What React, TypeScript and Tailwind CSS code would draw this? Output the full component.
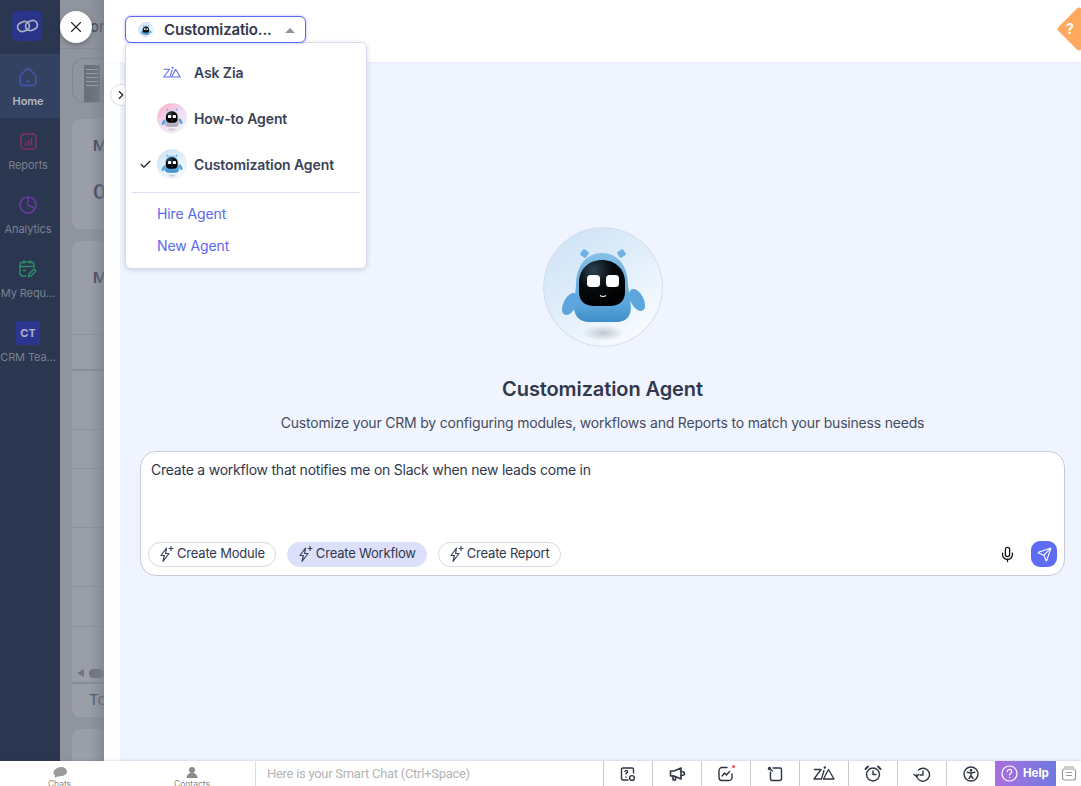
import React from "react";
import { X, ChevronRight, Check, Mic, Send } from "lucide-react";

const font = { fontFamily: "Inter, 'Liberation Sans', sans-serif" };

function Robot({ size, pink = false, id }: { size: number; pink?: boolean; id: string }) {
  const dark = pink ? "#a9a3bb" : "#3f8dc8";
  const light = pink ? "#d8d4e4" : "#86c0e8";
  return (
    <svg width={size} height={size} viewBox="0 0 120 120" className="shrink-0">
      <defs>
        <linearGradient id={id + "bg"} x1="0.15" y1="0.05" x2="0.8" y2="0.95">
          {pink ? (
            <>
              <stop offset="0" stopColor="#ffb0d0" />
              <stop offset="0.45" stopColor="#f0d8ec" />
              <stop offset="1" stopColor="#f3f2fa" />
            </>
          ) : (
            <>
              <stop offset="0" stopColor="#cfe3f6" />
              <stop offset="0.55" stopColor="#e4f0fb" />
              <stop offset="1" stopColor="#f9fcff" />
            </>
          )}
        </linearGradient>
        <linearGradient id={id + "body"} x1="0" y1="0" x2="0" y2="1">
          <stop offset="0" stopColor={light} />
          <stop offset="0.75" stopColor={pink ? "#bdb8cb" : "#5aa5dc"} />
          <stop offset="1" stopColor={dark} />
        </linearGradient>
        <radialGradient id={id + "face"} cx="0.32" cy="0.22" r="0.8">
          <stop offset="0" stopColor="#2c4250" />
          <stop offset="0.5" stopColor="#070b0f" />
          <stop offset="1" stopColor="#000" />
        </radialGradient>
        <radialGradient id={id + "shadow"}>
          <stop offset="0" stopColor="#b4b8c2" stopOpacity="0.75" />
          <stop offset="1" stopColor="#b4b8c2" stopOpacity="0" />
        </radialGradient>
      </defs>
      <circle cx="60" cy="60" r="59.5" fill={`url(#${id}bg)`} stroke="#d6dcee" />
      <ellipse cx="60" cy="106" rx="21" ry="8" fill={`url(#${id}shadow)`} />
      <rect x="38" y="23" width="7" height="7" rx="1.5" transform="rotate(35 41.5 26.5)" fill="#6db2e2" />
      <rect x="75" y="23" width="7" height="7" rx="1.5" transform="rotate(-35 78.5 26.500)" fill="#6db2e2" />
      <ellipse cx="27" cy="77" rx="6.500" ry="12" transform="rotate(28 27 77)" fill="#5ca6dd" />
      <ellipse cx="94" cy="73" rx="6.500" ry="12" transform="rotate(-28 94 73)" fill="#5ca6dd" />
      <path d="M33 58 C33 38 44 26 59 26 C74 26 85 38 85 58 L88 80 C88 90 82 95 74 95 L46 95 C38 95 31 90 31 80 Z" fill={`url(#${id}body)`} />
      <path d="M36 55 C36 42 46 33 59 33 C72 33 82 42 82 55 L82 65 C82 74 76 79 67 79 L51 79 C42 79 36 74 36 65 Z" fill={`url(#${id}face)`} />
      <rect x="44" y="48" width="13" height="12" rx="3.500" fill="#fff" />
      <rect x="63" y="48" width="13" height="12" rx="3.500" fill="#fff" />
      <path d="M57 68.500 Q60 70.500 63 68.500" stroke="#fff" strokeWidth="1.2" fill="none" />
    </svg>
  );
}

function ZiaLogo({ w = 18, h = 13, color = "#5a68ee", sw = 1.3 }: { w?: number; h?: number; color?: string; sw?: number }) {
  return (
    <svg width={w} height={h} viewBox="0 0 22 15" fill="none" stroke={color} strokeWidth={sw} strokeLinejoin="round" strokeLinecap="round">
      <path d="M1.500 3.500H8L1 13H8" />
      <path d="M11 4.500L8.500 13" />
      <circle cx="11.800" cy="1.600" r="0.600" fill={color} />
      <path d="M15.500 3.500L21 13H10.500Z" />
    </svg>
  );
}

function Spark() {
  return (
    <svg width="17" height="18" viewBox="0 0 17 18" fill="none" stroke="#3d4660" strokeWidth="1.2" strokeLinejoin="round" strokeLinecap="round">
      <path d="M8.500 3L3 10.500H6.400L5 16.500L11 8.500H7.600L8.500 3Z" />
      <path d="M13 1.500V5.500M11 3.500H15" />
    </svg>
  );
}

function Chip({ label, active = false }: { label: string; active?: boolean }) {
  return (
    <div className={`flex items-center gap-[2px] h-[25px] pl-[9px] pr-[10px] rounded-full text-[13px] tracking-[-0.2px] text-[#30384e] border ${active ? "bg-[#dde0fa] border-[#dde0fa]" : "bg-white border-[#d8dae8]"}`}>
      <Spark />
      <span>{label}</span>
    </div>
  );
}

function NavItem({ icon, label, active = false }: { icon: React.ReactNode; label: string; active?: boolean }) {
  return (
    <div className={`h-[64px] shrink-0 flex flex-col items-center justify-start pt-[12px] pr-[4px] ${active ? "bg-[#344262]" : ""}`}>
      <div className="h-[22px] flex items-center">{icon}</div>
      <div className={`mt-[6px] text-[11px] tracking-[-0.1px] leading-[14px] whitespace-nowrap ${active ? "text-[#b4b8c2] font-semibold" : "text-[#7b8190]"}`}>{label}</div>
    </div>
  );
}

function Row({ h, thick = false }: { h: number; thick?: boolean }) {
  return <div style={{ height: h }} className={`shrink-0 ${thick ? "border-b-[2px] border-[#868b99]" : "border-b border-[#8c919e]"}`} />;
}

function BarIcon({ children }: { children: React.ReactNode }) {
  return <div className="w-[49px] h-full flex items-center justify-center border-l border-[#c6c8d2]">{children}</div>;
}

const stroke = { fill: "none", stroke: "#2f3542", strokeWidth: 1.4, strokeLinecap: "round", strokeLinejoin: "round" } as const;

export default function App() {
  return (
    <div style={font} className="relative w-[1081px] h-[786px] overflow-hidden flex flex-col bg-white">
      <div className="flex h-[761px] shrink-0 min-h-0">
        {/* nav */}
        <div className="w-[60px] shrink-0 bg-[#2b3650] flex flex-col">
          <div className="h-[54px] shrink-0 pt-[11px] pl-[12px]">
            <div className="w-[30px] h-[30px] rounded-[5px] bg-[#2a3488] flex items-center justify-center">
              <svg width="23" height="16" viewBox="0 0 23 16" fill="none" stroke="#aab0c4" strokeWidth="1.800">
                <rect x="1.500" y="4" width="12" height="9" rx="4.500" transform="rotate(-22 7.500 8.500)" />
                <rect x="9.500" y="3" width="12" height="9" rx="4.500" transform="rotate(-22 15.500 7.500)" />
              </svg>
            </div>
          </div>
          <NavItem
            active
            label="Home"
            icon={
              <svg width="18" height="20" viewBox="0 0 18 20" fill="none" stroke="#4358b0" strokeWidth="1.500" strokeLinecap="round" strokeLinejoin="round">
                <path d="M2 7.500L7.500 2.300a2.200 2.200 0 0 1 3 0L16 7.500a2 2 0 0 1 .7 1.500v6.500a3 3 0 0 1-3 3H4.300a3 3 0 0 1-3-3V9A2 2 0 0 1 2 7.500Z" />
                <path d="M7.500 14.500h3" />
              </svg>
            }
          />
          <NavItem
            label="Reports"
            icon={
              <svg width="17" height="17" viewBox="0 0 17 17" fill="none" stroke="#8a2f5e" strokeWidth="1.500" strokeLinecap="round">
                <rect x="1" y="1" width="15" height="15" rx="3.500" />
                <path d="M5.500 12V10M8.500 12V8M11.500 12V5.500" />
              </svg>
            }
          />
          <NavItem
            label="Analytics"
            icon={
              <svg width="18" height="18" viewBox="0 0 18 18" fill="none" stroke="#6b3aa5" strokeWidth="1.500" strokeLinejoin="round">
                <circle cx="9" cy="9" r="8" />
                <path d="M9 1V9L16 12.500" />
              </svg>
            }
          />
          <NavItem
            label="My Requ..."
            icon={
              <svg width="18" height="18" viewBox="0 0 18 18" fill="none" stroke="#2f8a68" strokeWidth="1.500" strokeLinecap="round" strokeLinejoin="round">
                <path d="M7 16H4a3 3 0 0 1-3-3V5a3 3 0 0 1 3-3h8a3 3 0 0 1 3 3v2" />
                <path d="M1 6.500h14M5 .800v2.500M11 .800v2.500M4.500 10.500h2" />
                <path d="M9.500 16.500l.5-2.500 5-5 2 2-5 5Z" />
              </svg>
            }
          />
          <NavItem
            label="CRM Tea..."
            icon={
              <div className="w-[24px] h-[24px] rounded-[3px] bg-[#2c3590] flex items-center justify-center text-[11px] font-bold text-[#aab4c8]">CT</div>
            }
          />
        </div>

        {/* dimmed page */}
        <div className="w-[44px] shrink-0 bg-[#90949f] overflow-hidden flex flex-col relative text-[#3c4250]">
          <div className="h-[49px] shrink-0 border-b border-[#868b97] pl-[30px] pt-[18px] text-[15px] leading-[18px] whitespace-nowrap font-medium">on</div>
          <div className="ml-[12px] mt-[9px] w-[60px] h-[45px] shrink-0 rounded-l-[12px] border border-[#81858f] flex items-end gap-[1px] pl-[11px]">
            <div className="w-[16px] h-[37px] bg-[#6c7079] flex flex-col gap-[3px] pt-[4px] px-[2px]">
              <div className="h-[1px] bg-[#9a9ea8]" />
              <div className="h-[1px] bg-[#9a9ea8]" />
              <div className="h-[1px] bg-[#9a9ea8]" />
              <div className="h-[1px] bg-[#9a9ea8]" />
              <div className="h-[1px] bg-[#9a9ea8]" />
            </div>
            <div className="w-[6px] h-[24px] bg-[#7f838d]" />
          </div>
          <div className="ml-[12px] mt-[16px] h-[110px] shrink-0 rounded-l-[8px] bg-[#9a9ea8] pl-[21px] pt-[18px] text-[15px] leading-[18px] font-semibold">
            <div>M</div>
            <div className="mt-[25px] text-[20px] leading-[24px]">0</div>
          </div>
          <div className="ml-[12px] mt-[12px] h-[476px] shrink-0 rounded-l-[8px] bg-[#9a9ea8] flex flex-col">
            <div className="shrink-0 pl-[21px] pt-[28px] text-[15px] leading-[18px] font-semibold h-[94px] border-b border-[#8c919e]">M</div>
            <Row h={36} thick />
            <Row h={59} />
            <Row h={39} />
            <Row h={59} />
            <Row h={59} />
            <Row h={40} />
            <div className="h-[57px] shrink-0 border-b-[2px] border-[#868b99] flex items-end pb-[4px] pl-[5px] gap-[5px]">
              <div className="w-0 h-0 border-y-[4px] border-y-transparent border-r-[7px] border-r-[#70747f] mb-[1px]" />
              <div className="w-[20px] h-[9px] rounded-full bg-[#70747f]" />
            </div>
            <div className="pl-[17px] pt-[7px] text-[15px] leading-[18px] text-[#50545e]">To</div>
          </div>
          <div className="ml-[12px] mt-[12px] h-[40px] shrink-0 rounded-l-[8px] bg-[#9a9ea8]" />
          <div className="absolute right-0 top-0 bottom-0 w-[14px] bg-gradient-to-r from-transparent to-[#7c808c]/70" />
        </div>

        {/* panel */}
        <div className="flex-1 min-w-0 flex flex-col bg-white">
          <div className="h-[62px] shrink-0 bg-white shadow-[0_1px_2px_rgba(60,70,120,0.05)] relative z-10" />
          <div className="flex-1 flex">
            <div className="w-[16px] bg-white shrink-0" />
            <div className="flex-1 bg-[#f0f4fe] flex flex-col items-center pt-[165px] pl-[20px] pr-[16px]">
              <Robot size={120} id="main" />
              <div className="mt-[29px] text-[20px] leading-[26px] font-semibold tracking-[-0.1px] text-[#30384e]">Customization Agent</div>
              <div className="mt-[11px] text-[14px] leading-[20px] tracking-[-0.2px] text-[#444c60]">
                Customize your CRM by configuring modules, workflows and Reports to match your business needs
              </div>
              <div className="mt-[18px] w-[925px] h-[125px] shrink-0 rounded-[16px] border border-[#c9cbd8] bg-white flex flex-col justify-between pl-[10px] pr-[7px] pt-[8px] pb-[8px]">
                <div className="text-[14px] leading-[20px] tracking-[-0.23px] text-[#30384e]">Create a workflow that notifies me on Slack when new leads come in</div>
                <div className="flex items-center justify-between">
                  <div className="flex items-center gap-[11px] -ml-[3px]">
                    <Chip label="Create Module" />
                    <Chip active label="Create Workflow" />
                    <Chip label="Create Report" />
                  </div>
                  <div className="flex items-center gap-[15px]">
                    <Mic size={17} strokeWidth={1.800} color="#111" />
                    <div className="w-[26px] h-[26px] rounded-[9px] bg-[#5d6cf2] flex items-center justify-center">
                      <Send size={15} strokeWidth={1.800} color="#fff" />
                    </div>
                  </div>
                </div>
              </div>
            </div>
          </div>
        </div>
      </div>

      {/* bottom bar */}
      <div className="h-[25px] shrink-0 bg-white flex items-stretch shadow-[0_-1px_2px_rgba(60,70,100,0.15)] relative z-10 overflow-hidden">
        <div className="w-[119px] flex flex-col items-center pt-[6px]">
          <svg width="14" height="11" viewBox="0 0 14 11" fill="#9a9a9a" className="shrink-0">
            <ellipse cx="8" cy="4.500" rx="6" ry="4.500" />
            <ellipse cx="5" cy="5.500" rx="4.500" ry="4" />
            <path d="M2 8L1.500 11L5 9Z" />
          </svg>
          <div className="mt-[1px] text-[8.500px] leading-[10px] text-[#8a8a8a]">Chats</div>
        </div>
        <div className="w-[136px] flex flex-col items-center pt-[6px] pl-[10px]">
          <svg width="14" height="11" viewBox="0 0 14 11" fill="#8a8a8a" className="shrink-0">
            <circle cx="7" cy="3" r="3" />
            <path d="M1.500 11C1.500 7.500 4 6 7 6C10 6 12.500 7.500 12.500 11Z" />
          </svg>
          <div className="mt-[1px] text-[8.500px] leading-[10px] text-[#8a8a8a]">Contacts</div>
        </div>
        <div className="w-[348px] border-l border-[#dcdcdc] pl-[11px] flex items-center font-['Roboto',sans-serif] text-[13px] tracking-[-0.28px] text-[#b4b4b4]">
          Here is your Smart Chat (Ctrl+Space)
        </div>
        <BarIcon>
          <svg width="16" height="16" viewBox="0 0 16 16" {...stroke}>
            <path d="M8 14H3a1.500 1.500 0 0 1-1.500-1.500v-9A1.500 1.500 0 0 1 3 2h9a1.500 1.500 0 0 1 1.500 1.500V7" />
            <path d="M5 5.500a1.300 1.300 0 1 1 1.600 1.400c-.4.2-.6.4-.6 1M6 11v.2" />
            <circle cx="12" cy="12" r="2.400" />
          </svg>
        </BarIcon>
        <BarIcon>
          <svg width="17" height="16" viewBox="0 0 17 16" {...stroke} strokeWidth={1.600}>
            <path d="M12 2L5 5H1.500v5H5l7 3Z" />
            <path d="M12 5.500c2 0 3.500 1 3.500 2s-1.500 2-3.500 2" />
            <path d="M4 10v4h2.500v-3" />
          </svg>
        </BarIcon>
        <BarIcon>
          <div className="relative">
            <svg width="16" height="16" viewBox="0 0 16 16" {...stroke}>
              <path d="M9 1.500H4a3 3 0 0 0-3 3v7a3 3 0 0 0 3 3h7a3 3 0 0 0 3-3V8" />
              <path d="M4 10l2.500-3 2 2 3-3.500" />
            </svg>
            <div className="absolute -top-[1px] -right-[1px] w-[3px] h-[3px] rounded-full bg-[#f0504a]" />
          </div>
        </BarIcon>
        <BarIcon>
          <svg width="16" height="16" viewBox="0 0 16 16" {...stroke}>
            <path d="M6 2h7a1.500 1.500 0 0 1 1.500 1.500v9A2 2 0 0 1 12.500 14.500H5A1.500 1.500 0 0 1 3.500 13V6" />
            <circle cx="2.500" cy="2.500" r="1" />
            <path d="M3 3l2.500 2" />
          </svg>
        </BarIcon>
        <BarIcon>
          <ZiaLogo w={22} h={15} color="#2f3542" sw={1.300} />
        </BarIcon>
        <BarIcon>
          <svg width="18" height="17" viewBox="0 0 18 17" {...stroke}>
            <circle cx="9" cy="9.500" r="6.500" />
            <path d="M9 6v3.500h3" />
            <path d="M1.500 4L4 1.500M16.500 4L14 1.500" strokeWidth={1.800} />
          </svg>
        </BarIcon>
        <BarIcon>
          <svg width="18" height="16" viewBox="0 0 18 16" {...stroke}>
            <path d="M3.500 9a6.500 6.500 0 1 0 2-5" />
            <path d="M1 8.500l2.500 2 2-2" />
            <path d="M10 5v4H7" />
          </svg>
        </BarIcon>
        <BarIcon>
          <svg width="16" height="16" viewBox="0 0 16 16" {...stroke}>
            <circle cx="8" cy="8" r="7" />
            <circle cx="8" cy="4.300" r="0.700" fill="#2f3542" />
            <path d="M4.200 6.300L8 7l3.800-.7M8 7v2.500M8 9.500L6 12.500M8 9.500l2 3" />
          </svg>
        </BarIcon>
        <div className="w-[61px] flex items-center gap-[5px] pl-[6px] bg-gradient-to-r from-[#a96fde] to-[#6d79e0] text-white">
          <svg width="17" height="17" viewBox="0 0 17 17" fill="none" stroke="#fff" strokeWidth="1.200" strokeLinecap="round">
            <circle cx="8.500" cy="8.500" r="7.500" />
            <path d="M6.300 6.500a2.200 2.200 0 1 1 3.300 2c-.7.400-1.100.8-1.100 1.500M8.500 12.300v.1" />
          </svg>
          <span className="text-[11.500px] font-bold">Help</span>
        </div>
        <div className="flex-1 flex items-center justify-center">
          <svg width="16" height="15" viewBox="0 0 16 15" fill="none" stroke="#9a9a9a" strokeWidth="1.200" strokeLinejoin="round">
            <rect x="1.500" y="3" width="13" height="11" rx="2" />
            <path d="M3 1h10M5 6.500h6M5 9.500h6" />
          </svg>
        </div>
      </div>

      {/* close */}
      <div className="absolute left-[60px] top-[11px] w-[32px] h-[32px] rounded-full bg-white shadow-[0_2px_5px_rgba(0,0,0,0.25)] flex items-center justify-center z-20">
        <X size={18} strokeWidth={1.500} color="#222" />
      </div>

      {/* collapse chevron */}
      <div className="absolute left-[110px] top-[84px] w-[22px] h-[22px] rounded-full bg-white border border-[#dcdcea] flex items-center justify-center z-20">
        <ChevronRight size={14} strokeWidth={2} color="#222" />
      </div>

      {/* dropdown trigger */}
      <div className="absolute left-[125px] top-[16px] w-[181px] h-[27px] rounded-[6px] bg-white border border-[#5b6af5] shadow-[0_0_3px_rgba(91,106,245,0.5)] flex items-center pl-[12px] pt-[1px] z-30">
        <Robot size={16} id="trigger" />
        <span className="ml-[10px] text-[15px] font-semibold tracking-[-0.15px] text-[#30384e] whitespace-nowrap">Customizatio...</span>
        <div className="ml-[13px] w-0 h-0 border-x-[5px] border-x-transparent border-b-[5px] border-b-[#8f94a3]" />
      </div>

      {/* dropdown menu */}
      <div className="absolute left-[125px] top-[42px] w-[242px] h-[227px] rounded-[6px] bg-white border border-[#d8dbec] shadow-[0_1px_5px_rgba(60,70,120,0.2)] z-20 flex flex-col px-[6px]">
        <div className="h-[46px] mt-[6px] flex items-center pl-[31px] gap-[13px]">
          <ZiaLogo w={18} h={13} />
          <span className="text-[14px] font-semibold tracking-[-0.1px] text-[#3a4256]">Ask Zia</span>
        </div>
        <div className="h-[46px] flex items-center pl-[25px] gap-[7px]">
          <Robot size={30} pink id="howto" />
          <span className="text-[14px] font-semibold tracking-[-0.1px] text-[#3a4256]">How-to Agent</span>
        </div>
        <div className="h-[46px] flex items-center pl-[7px] gap-[5px]">
          <Check size={13} strokeWidth={2.200} color="#222" />
          <Robot size={30} id="cust" />
          <span className="ml-[2px] text-[14px] font-semibold tracking-[-0.1px] text-[#3a4256]">Customization Agent</span>
        </div>
        <div className="h-px bg-[#dcdcf0] mt-[5px]" />
        <div className="pl-[25px] mt-[4px] h-[32px] flex items-center text-[14px] tracking-[-0.1px] text-[#5a68ee]">Hire Agent</div>
        <div className="pl-[25px] h-[32px] flex items-center text-[14px] tracking-[-0.1px] text-[#5a68ee]">New Agent</div>
      </div>

      {/* help diamond */}
      <div className="absolute left-[1063px] top-[13px] w-[32px] h-[32px] rotate-45 rounded-[3px] bg-[#ffa95e] z-20" />
      <div className="absolute left-[1066px] top-[20px] text-[14px] leading-[18px] font-bold text-white z-20">?</div>
    </div>
  );
}
